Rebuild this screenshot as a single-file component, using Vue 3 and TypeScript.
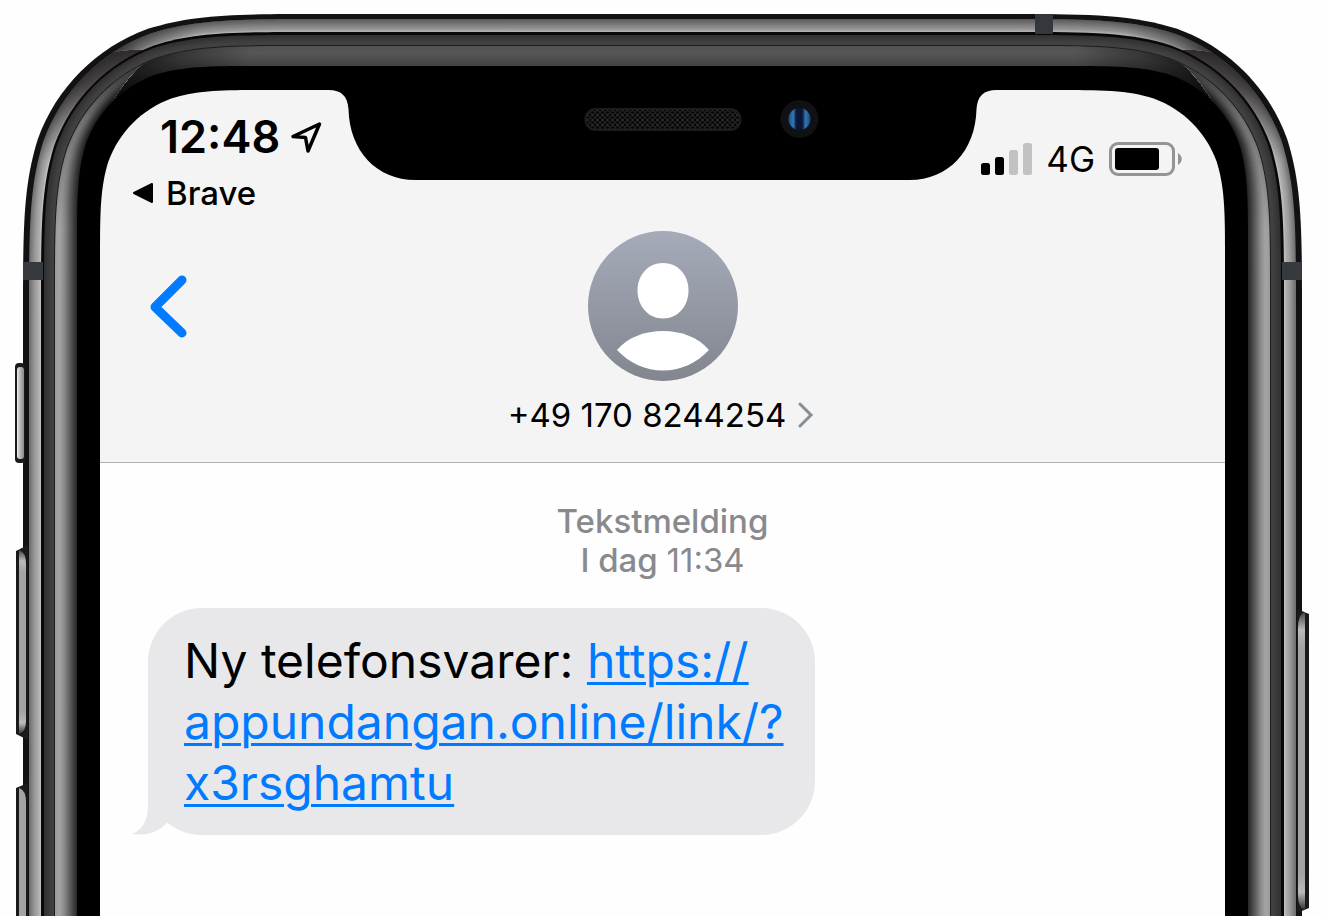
<script setup lang="ts">
import { computed, onBeforeUnmount, onMounted, ref } from 'vue'

interface Layer {
  d: string
  fill: string
}

const width = ref(window.innerWidth)
const height = ref(window.innerHeight)

function measure(): void {
  width.value = document.documentElement.clientWidth
  height.value = window.innerHeight
}

onMounted(() => {
  measure()
  window.addEventListener('resize', measure)
})
onBeforeUnmount(() => window.removeEventListener('resize', measure))

const mid = computed(() => width.value / 2)
const bottom = computed(() => height.value + 400)

/* Left half of a rounded body with a continuous-curvature corner. */
function half(x: number, y: number, r: number): string {
  const p = (a: number, b: number) => `${(x + a * r).toFixed(2)} ${(y + b * r).toFixed(2)}`
  return (
    `M${x} ${bottom.value}L${p(0, 1.528)}` +
    `C${p(0, 1.088)} ${p(0, 0.868)} ${p(0.075, 0.631)}` +
    `C${p(0.169, 0.372)} ${p(0.372, 0.169)} ${p(0.631, 0.075)}` +
    `C${p(0.868, 0)} ${p(1.088, 0)} ${p(1.528, 0)}` +
    `H${mid.value + 0.5}V${bottom.value}Z`
  )
}

const mix = (a: number, b: number, t: number) => Math.round(a + (b - a) * t)

function band(
  from: [number, number, number],
  to: [number, number, number],
  stops: number[],
  steps: number,
): Layer[] {
  return Array.from({ length: steps }, (_, i) => {
    const t = i / steps
    const pos = t * (stops.length - 1)
    const k = Math.floor(pos)
    const g = mix(stops[k], stops[k + 1], pos - k)
    const at = (n: number) => from[n] + (to[n] - from[n]) * t
    return { d: half(at(0), at(1), at(2)), fill: `rgb(${g},${g - 1},${g - 1})` }
  })
}

const outer = computed(() => half(23, 14, 198))
const metalSide = computed(() => band([29, 19, 193], [41, 32, 179], [112, 135, 158, 172, 200], 16))
const metalTop = computed(() => band([29, 19, 193], [41, 32, 179], [92, 112, 132, 150, 190], 16))
const gap = computed(() => half(41, 32, 179))
const rim = computed(() => band([44, 35, 174], [55, 45, 163], [50, 58, 66, 68], 10))
const line = computed(() => half(54, 45, 164))
const glassSide = computed(() => band([55, 46, 163], [77, 66, 122], [158, 164, 140, 105, 70, 38], 30))
const glassTop = computed(() => band([55, 46, 163], [77, 66, 122], [84, 86, 78, 66], 20))
const bezel = computed(() => half(77, 66, 122))
const hole = computed(() => half(100, 90, 113))

const notch = computed(() => {
  const m = mid.value
  return (
    `M${m - 340} 88L${m - 334} 90C${m - 321} 90 ${m - 315} 96 ${m - 314} 109` +
    `C${m - 313} 151 ${m - 286} 180 ${m - 247} 180H${m + 247}` +
    `C${m + 286} 180 ${m + 313} 151 ${m + 314} 109` +
    `C${m + 315} 96 ${m + 321} 90 ${m + 334} 90L${m + 340} 88Z`
  )
})

const bars = [
  { x: 0, y: 20, h: 12, on: true },
  { x: 14, y: 14, h: 18, on: true },
  { x: 28, y: 7, h: 25, on: false },
  { x: 42, y: 0, h: 32, on: false },
]
</script>

<template>
  <div class="phone">
    <main class="screen">
      <header class="header">
        <div class="status">
          <div class="status-left">
            <div class="clock">
              <time>12:48</time>
              <svg class="location" width="32" height="34" viewBox="0 0 32 34" aria-hidden="true">
                <path d="M29.500 4L3 16.500L15.500 17.500L18 31Z" />
              </svg>
            </div>
            <button class="return" type="button">
              <svg width="22" height="22" viewBox="0 0 22 22" aria-hidden="true">
                <path d="M2 11L20 2V20Z" />
              </svg>
              <span>Brave</span>
            </button>
          </div>
          <div class="status-right">
            <svg width="51" height="32" viewBox="0 0 51 32" aria-hidden="true">
              <rect
                v-for="bar in bars"
                :key="bar.x"
                :x="bar.x"
                :y="bar.y"
                width="9"
                :height="bar.h"
                rx="2.500"
                :class="bar.on ? 'bar-on' : 'bar-off'"
              />
            </svg>
            <span class="network">4G</span>
            <svg width="74" height="34" viewBox="0 0 74 34" aria-hidden="true">
              <rect class="cell" x="1.500" y="1.500" width="63" height="31" rx="7.500" />
              <rect x="6" y="6" width="44" height="22" rx="3" />
              <path class="cap" d="M69 11C74 14 74 20 69 23Z" />
            </svg>
          </div>
        </div>

        <div class="contact">
          <button class="back" type="button" aria-label="Tilbake">
            <svg width="40" height="64" viewBox="0 0 40 64" aria-hidden="true">
              <path d="M33 5L6 32L33 58" />
            </svg>
          </button>
          <button class="person" type="button">
            <svg width="150" height="150" viewBox="0 0 150 150" aria-hidden="true">
              <defs>
                <linearGradient id="avatar" x1="0" y1="0" x2="0" y2="1">
                  <stop offset="0" stop-color="#a5abb9" />
                  <stop offset="1" stop-color="#82868f" />
                </linearGradient>
              </defs>
              <circle cx="75" cy="75" r="75" fill="url(#avatar)" />
              <path
                fill="#fff"
                d="M75 32C90 32 100.500 44 100.500 59.500C100.500 75 90 87.500 75 87.500C60 87.500 49.500 75 49.500 59.500C49.500 44 60 32 75 32Z"
              />
              <path
                fill="#fff"
                d="M29 119C40 106 57 100 75 100C93 100 110 106 121 119C109 132 92 139.500 75 139.500C58 139.500 41 132 29 119Z"
              />
            </svg>
            <span class="number">
              +49 170 8244254
              <svg width="19" height="26" viewBox="0 0 19 26" aria-hidden="true">
                <path d="M2 2L13 13L2 24" />
              </svg>
            </span>
          </button>
        </div>
      </header>

      <section class="thread">
        <p class="stamp">
          <span>Tekstmelding</span>
          <span>I dag <time>11:34</time></span>
        </p>
        <div class="bubble">
          <svg class="tail" width="40" height="70" viewBox="0 0 40 70" aria-hidden="true">
            <path d="M16 0V38C16 54 12 64 0 69C14 71 25 68 35 58L40 0Z" />
          </svg>
          <p class="message">
            Ny telefonsvarer:
            <a href="#message-link">https://<wbr />appundangan.online/link/?<wbr />x3rsghamtu</a>
          </p>
        </div>
      </section>
    </main>

    <svg class="frame" :width="width" height="100%" aria-hidden="true">
      <defs>
        <clipPath id="glass-side-clip">
          <path :d="`M0 30L152 58L138 68Q122 84 110 106L100 150V${bottom}H0Z`" />
        </clipPath>
        <clipPath id="metal-top-clip">
          <path :d="`M90 0H${mid + 1}V60H150L142 50Q120 48 96 58Z`" />
        </clipPath>
        <linearGradient id="metal-top-fade" gradientUnits="userSpaceOnUse" x1="98" y1="0" x2="200" y2="0">
          <stop offset="0" stop-color="#2a2627" stop-opacity="0.900" />
          <stop offset="0.400" stop-color="#2a2627" stop-opacity="0.350" />
          <stop offset="1" stop-color="#2a2627" stop-opacity="0" />
        </linearGradient>
        <linearGradient id="glass-top-fade" gradientUnits="userSpaceOnUse" x1="115" y1="0" x2="250" y2="0">
          <stop offset="0" stop-color="#000" stop-opacity="0.850" />
          <stop offset="0.500" stop-color="#000" stop-opacity="0.350" />
          <stop offset="1" stop-color="#000" stop-opacity="0" />
        </linearGradient>
        <linearGradient id="glass-side-fade" gradientUnits="userSpaceOnUse" x1="0" y1="60" x2="0" y2="230">
          <stop offset="0" stop-color="#000" stop-opacity="0.700" />
          <stop offset="0.350" stop-color="#000" stop-opacity="0.300" />
          <stop offset="1" stop-color="#000" stop-opacity="0" />
        </linearGradient>
        <linearGradient id="metal-fade" gradientUnits="userSpaceOnUse" x1="118" y1="40" x2="42" y2="160">
          <stop offset="0" stop-color="#1f1a1c" stop-opacity="0.880" />
          <stop offset="0.400" stop-color="#1f1a1c" stop-opacity="0.700" />
          <stop offset="1" stop-color="#1f1a1c" stop-opacity="0" />
        </linearGradient>
        <linearGradient id="key" x1="0" y1="0" x2="1" y2="0">
          <stop offset="0" stop-color="#eee" />
          <stop offset="0.400" stop-color="#bbb" />
          <stop offset="1" stop-color="#888" />
        </linearGradient>
        <linearGradient id="key-long" x1="0" y1="0" x2="0" y2="1">
          <stop offset="0" stop-color="#444" />
          <stop offset="0.060" stop-color="#bbb" />
          <stop offset="0.120" stop-color="#a5a3a3" />
          <stop offset="0.880" stop-color="#a5a3a3" />
          <stop offset="0.940" stop-color="#bbb" />
          <stop offset="1" stop-color="#333" />
        </linearGradient>
        <linearGradient id="lens" x1="0" y1="0" x2="1" y2="0">
          <stop offset="0" stop-color="#1d4f86" />
          <stop offset="0.220" stop-color="#3279b8" />
          <stop offset="0.350" stop-color="#0b1838" />
          <stop offset="0.620" stop-color="#0b1533" />
          <stop offset="0.780" stop-color="#2f77b8" />
          <stop offset="1" stop-color="#174577" />
        </linearGradient>
        <pattern id="mesh" width="5" height="5" patternUnits="userSpaceOnUse">
          <rect width="5" height="5" fill="#070707" />
          <path d="M0 0L5 5M5 0L0 5" stroke="#333" stroke-width="1" />
        </pattern>
        <mask id="cutout" maskUnits="userSpaceOnUse" x="0" y="0" :width="mid + 1" :height="bottom">
          <rect :width="mid + 1" :height="bottom" fill="#fff" />
          <path :d="hole" fill="#000" />
        </mask>
        <g id="half-body">
          <g mask="url(#cutout)">
            <path :d="outer" fill="#131213" />
            <path v-for="(l, i) in metalSide" :key="`ms${i}`" :d="l.d" :fill="l.fill" />
            <path :d="half(29, 19, 193)" fill="url(#metal-fade)" />
            <g clip-path="url(#metal-top-clip)">
              <path v-for="(l, i) in metalTop" :key="`mt${i}`" :d="l.d" :fill="l.fill" />
              <path :d="half(29, 19, 193)" fill="url(#metal-top-fade)" />
            </g>
            <path :d="gap" fill="#080808" />
            <path v-for="(l, i) in rim" :key="`r${i}`" :d="l.d" :fill="l.fill" />
            <path :d="line" fill="#1c1c1c" />
            <path v-for="(l, i) in glassTop" :key="`gt${i}`" :d="l.d" :fill="l.fill" />
            <path :d="half(55, 46, 163)" fill="url(#glass-top-fade)" />
            <g clip-path="url(#glass-side-clip)">
              <path v-for="(l, i) in glassSide" :key="`gs${i}`" :d="l.d" :fill="l.fill" />
              <path :d="half(55, 46, 163)" fill="url(#glass-side-fade)" />
            </g>
            <path :d="bezel" fill="#000" />
          </g>
          <rect x="23" y="262" width="20" height="18" fill="#363a3f" />
        </g>
      </defs>

      <use href="#half-body" />
      <use href="#half-body" :transform="`translate(${width} 0) scale(-1 1)`" />
      <rect :x="width - 290" y="14" width="18" height="20" fill="#34383d" />

      <rect x="15" y="363" width="10" height="100" rx="4" fill="#1a1a1a" />
      <rect x="17" y="367" width="7" height="92" rx="3" fill="url(#key)" />
      <path d="M28 545L16 551V734L28 740Z" fill="#1b1a1b" />
      <path d="M19 550Q26 552 26 564V721Q26 732 19 734Z" fill="url(#key-long)" />
      <path :d="`M28 783L16 788V${bottom}H28Z`" fill="#1b1a1b" />
      <path :d="`M19 788Q26 790 26 802V${bottom}H19Z`" fill="#a5a3a3" />
      <g :transform="`translate(${width - 29} 0)`">
        <path d="M1 609L13 614V908L1 913Z" fill="#1b1a1b" />
        <path d="M9 612Q2 614 2 628V895Q2 908 9 910Z" fill="url(#key-long)" />
      </g>

      <path :d="notch" fill="#000" />
      <g :transform="`translate(${mid} 0)`">
        <rect x="-77" y="109" width="155" height="21" rx="10" fill="url(#mesh)" stroke="#1c1c1c" stroke-width="2" />
        <circle cx="137" cy="119" r="19" fill="#101112" />
        <circle cx="137" cy="119" r="11" fill="url(#lens)" />
      </g>
    </svg>
  </div>
</template>

<style>
body {
  margin: 0;
  background: #fefefe;
}
</style>

<style scoped>
.phone {
  position: relative;
  min-height: 100vh;
  overflow: hidden;
  font-family: Inter, "Liberation Sans", sans-serif;
  color: #000;
}

.frame {
  position: absolute;
  inset: 0;
  pointer-events: none;
}

.screen {
  margin: 90px 100px 0;
}

button {
  padding: 0;
  border: 0;
  background: none;
  color: inherit;
  font: inherit;
  cursor: pointer;
}

svg {
  display: block;
}

.header {
  background: #f4f4f4;
  border-bottom: 1px solid #b0b0b2;
  padding-bottom: 27px;
}

.status {
  display: flex;
  justify-content: space-between;
  align-items: flex-start;
  height: 141px;
  padding: 0 42px 0 32px;
  box-sizing: border-box;
}

.status-left {
  display: flex;
  flex-direction: column;
  gap: 12px;
  padding-top: 23px;
}

.clock {
  display: flex;
  align-items: center;
  gap: 10px;
  padding-left: 28px;
  font-size: 45px;
  line-height: 48px;
  font-weight: 600;
}

.location path {
  fill: none;
  stroke: #000;
  stroke-width: 3.5;
  stroke-linejoin: round;
}

.return {
  display: flex;
  align-items: center;
  gap: 12px;
  font-size: 33px;
  line-height: 40px;
  font-weight: 500;
}

.return path {
  stroke: #000;
  stroke-width: 2;
  stroke-linejoin: round;
}

.status-right {
  display: flex;
  align-items: center;
  gap: 14px;
  padding-top: 49px;
}

.network {
  font-size: 35px;
  line-height: 40px;
}

.bar-on {
  fill: #000;
}

.bar-off {
  fill: #c2c2c2;
}

.cell {
  fill: none;
  stroke: #949494;
  stroke-width: 3;
}

.cap {
  fill: #949494;
}

.contact {
  display: grid;
  grid-template-columns: 1fr auto 1fr;
  align-items: start;
}

.back {
  justify-self: start;
  margin: 44px 0 0 49px;
}

.back path {
  fill: none;
  stroke: #007aff;
  stroke-width: 9;
  stroke-linecap: round;
  stroke-linejoin: round;
}

.person {
  display: flex;
  flex-direction: column;
  align-items: center;
  gap: 14px;
}

.number {
  display: flex;
  align-items: center;
  gap: 12px;
  font-size: 33px;
  line-height: 40px;
}

.number path {
  fill: none;
  stroke: #868e99;
  stroke-width: 3;
  stroke-linecap: round;
}

.thread {
  padding: 39px 48px 0;
}

.stamp {
  display: flex;
  flex-direction: column;
  align-items: center;
  margin: 0 0 28px;
  font-size: 33px;
  line-height: 39px;
  font-weight: 500;
  color: #8a8a8e;
}

.stamp time {
  font-weight: 400;
}

.bubble {
  position: relative;
  box-sizing: border-box;
  width: fit-content;
  max-width: 667px;
  padding: 22px 32px 22px 36px;
  border-radius: 54px;
  background: #e8e8ea;
}

.tail {
  position: absolute;
  left: -16px;
  bottom: 0;
  fill: #e8e8ea;
}

.message {
  position: relative;
  margin: 0;
  font-size: 48px;
  line-height: 61px;
}

.message a {
  color: #007aff;
  text-decoration-thickness: 3px;
  text-underline-offset: 4px;
}
</style>
